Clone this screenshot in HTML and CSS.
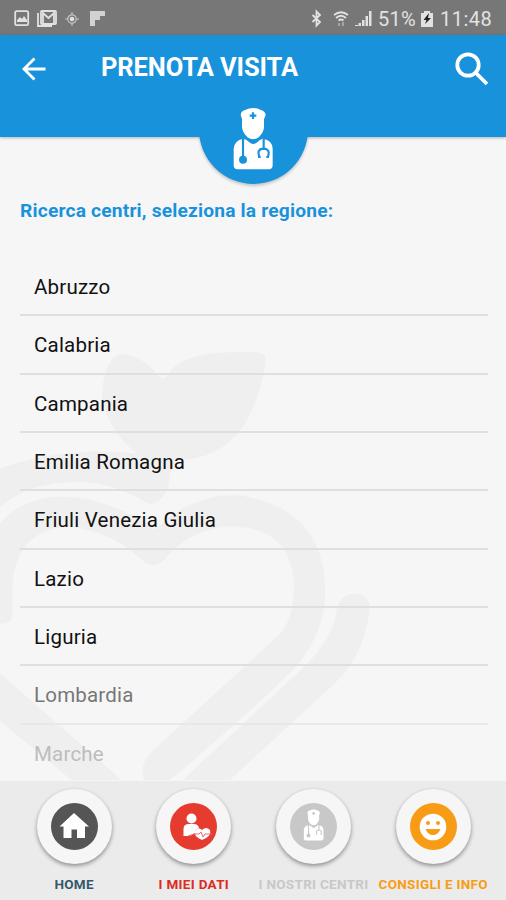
FILE: index.html
```html
<!DOCTYPE html>
<html lang="it">
<head>
<meta charset="utf-8">
<title>Prenota visita</title>
<link rel="stylesheet" href="styles.css">
</head>
<body>
<svg class="defs" aria-hidden="true">
  <symbol id="doctor" viewBox="160 50 125 190">
    <path d="M186 73Q187 62 199 59Q211 53 223 53Q235 53 247 59Q260 63 261 74L256 87V113Q253 130 238 142Q223 151 208 142Q192 129 190 111V87Z"/>
    <path d="M194 145Q204 147 212 156Q223 166 236 156Q243 147 252 145Q282 150 282 175V225Q282 237 270 237H177Q165 237 165 225V175Q166 151 194 145Z"/>
    <g class="cut"><path d="M223 66V86M213 76H233"/><path d="M193 144V200M255 145V178M243 201Q232 176 255 175Q277 177 267 201M238 200h8M263 200h8"/><circle class="cut-fill" cx="193" cy="208" r="12"/></g>
  </symbol>
</svg>
<div class="screen">
  <div class="status">
    <svg class="notices" viewBox="0 0 90 20" width="90" height="20">
      <rect x="1.2" y="2.2" width="13" height="14" rx="1.5" class="line"/><path d="M3 13V11L6 8L8 10L10 7L13 11V13Z"/>
      <path d="M24 4V17H38" class="line"/><rect x="27" y="2" width="15" height="13" rx="1" class="line"/><path d="M29 14V4L34.500 9L40 4V14" class="line"/>
      <circle cx="58" cy="10" r="4.200" class="thin"/><circle cx="58" cy="10" r="2.300"/><path d="M58 3V6M58 14V17M51 10H54M62 10H65" class="thin"/>
      <path d="M76 2H91V7H86V11H81V17H76Z" opacity=".85"/>
    </svg>
    <div class="phone">
      <svg viewBox="0 0 62 20" width="62" height="20">
        <path d="M2.500 6L10 13L6.500 16.500V2.500L10 6L2.500 13" class="line"/>
        <path d="M24 6Q31 .5 38 6M26 9Q31 4.500 36 9M28.500 11.500Q31 9.500 33.500 11.500" class="line"/><path d="M29 17v-3M33 13v4" class="thin"/>
        <path d="M45 16h3v1h-3zM48.500 14h2.500v3h-2.500zM52 11h2.500v6h-2.500zM55.500 7h2.500v10h-2.500zM59 2h2.500v15h-2.500z"/>
      </svg>
      <span class="percent">51%</span>
      <svg viewBox="0 0 12 18" width="12" height="18"><path d="M0 3H3V1H9V3H12V17H0Z"/><path d="M8 3L2.500 10H5.500L4 14L10 8H7Z" fill="#222"/></svg>
      <span class="clock">11:48</span>
    </div>
  </div>
  <header class="bar">
    <svg class="back" viewBox="0 0 24 24" width="24" height="24"><path d="M12.500 1.500L2 12L12.500 22.500M2 12H23.500"/></svg>
    <h1>PRENOTA VISITA</h1>
    <svg class="search" viewBox="0 0 34 34" width="34" height="34"><circle cx="13" cy="13" r="10.700"/><path d="M21 21L32 32"/></svg>
    <div class="badge"><svg width="41.700" height="63.300"><use href="#doctor"/></svg></div>
  </header>
  <main>
    <svg class="mark" viewBox="0 0 1200 1350">
      <path d="M498 142Q535 72 680 67H770Q802 69 797 95Q785 190 735 282Q660 390 535 389Q507 407 507 465Q480 532 440 519Q340 456 230 456Q90 455 0 531V415Q90 382 210 369Q330 357 412 371Q328 309 306 205Q305 134 336 88Q350 67 388 75Q446 94 474 137Q486 147 498 142Z"/>
      <path d="M0 580Q70 500 190 500Q325 500 465 600Q575 490 715 496Q974 532 976 784Q975 908 888 1010Q770 1131 510 1350H432Q416 1304 458 1262L845 907Q886 850 881 749Q867 589 685 589Q568 599 492 690Q460 722 423 688Q320 592 190 591Q49 609 37 765V865Q29 881 0 881Z"/>
      <path d="M0 1030L365 1350H215L0 1173Z"/>
      <path d="M1010 840Q1020 792 1065 791Q1104 794 1109 825Q1100 970 1003 1061L690 1350H548L908 1015Q998 930 1010 840Z"/>
    </svg>
    <h2>Ricerca centri, seleziona la regione:</h2>
    <ul class="regions">
      <li>Abruzzo</li><li>Calabria</li><li>Campania</li><li>Emilia Romagna</li><li>Friuli Venezia Giulia</li><li>Lazio</li><li>Liguria</li><li>Lombardia</li><li>Marche</li>
    </ul>
  </main>
  <nav>
    <a class="home"><span class="ring"><span class="disc"><svg viewBox="0 0 46 46"><path d="M23 9L38 22.500H34V34H26V25.500H20.500V34H12.500V22.500H8.500Z"/></svg></span></span><b>HOME</b></a>
    <a class="data"><span class="ring"><span class="disc"><svg viewBox="0 0 46 46"><circle cx="20.500" cy="14.500" r="5"/><path d="M12.500 32V25Q12.500 20 18 20H23Q27 20 28 24Q24 25 24 29L19 32Z"/><path d="M31 36Q22 32 24 27Q27 22 31 26Q35 22 39 26Q41 32 31 36Z"/><path class="pulse" d="M17 32L23 30H28L30 28L32 33L34 30H41"/></svg></span></span><b>I MIEI DATI</b></a>
    <a class="centers"><span class="ring"><span class="disc"><svg class="mini" width="20" height="32"><use href="#doctor"/></svg></span></span><b>I NOSTRI CENTRI</b></a>
    <a class="tips"><span class="ring"><span class="disc"><svg viewBox="0 0 46 46"><circle cx="23" cy="23" r="13.300"/><g fill="#f89c16"><circle cx="18" cy="19" r="2"/><circle cx="28" cy="19" r="2"/><path d="M15.500 25H30.500Q28 31 23 31Q18 31 15.500 25Z"/></g></svg></span></span><b>CONSIGLI E INFO</b></a>
  </nav>
</div>
</body>
</html>
```

FILE: styles.css
```css
* { box-sizing: border-box; }
body { margin: 0; font-family: Roboto, "Liberation Sans", sans-serif; background: #f6f6f6; --cut: #1992dc; }
.defs { position: absolute; width: 0; height: 0; }
.screen { width: 506px; height: 900px; display: flex; flex-direction: column; overflow: hidden; }
svg { display: block; flex: none; overflow: visible; }
.status { height: 35px; flex: none; background: #777; color: #e2e2e2; fill: #e2e2e2; display: flex; justify-content: space-between; align-items: center; padding: 2px 13px 0 14px; }
.status .line { fill: none; stroke: #e2e2e2; stroke-width: 1.8; }
.status .thin { fill: none; stroke: #c4c4c4; stroke-width: 1.2; }
.phone { display: flex; align-items: center; font-size: 20px; }
.percent { width: 40px; margin: 0 3px 0 6px; letter-spacing: .2px; }
.clock { width: 53px; margin-left: 7px; letter-spacing: .5px; white-space: nowrap; }
.bar { height: 102px; flex: none; background: #1992dc; position: relative; z-index: 2; display: flex; align-items: flex-start; padding: 17px 17px 0 22px; box-shadow: 0 1px 3px #0004; }
.back { margin-top: 5px; }
.back path, .search { fill: none; stroke: #fff; stroke-width: 2.8; }
.search { stroke-width: 3.8; }
h1 { flex: 1; margin: 0 0 0 55px; font-size: 25.500px; line-height: 31px; font-weight: 700; color: #fff; letter-spacing: -.1px; }
.badge { position: absolute; left: 198.500px; top: 40px; width: 109px; height: 109px; border-radius: 50%; background: #1992dc; display: flex; justify-content: center; padding-top: 31.700px; fill: #fff; box-shadow: 0 2px 3px #0003; clip-path: inset(31px -8px -8px -8px); }
.badge::before { content: ""; position: absolute; left: -8px; top: 32px; width: 125px; height: 30px; background: #1992dc; }
.badge svg { position: relative; }
.cut { fill: none; stroke: var(--cut); stroke-width: 6.500; }
.cut-fill { fill: var(--cut); stroke: none; }
main { flex: 1; min-height: 0; position: relative; padding: 61px 18px 0 20px; }
.mark { position: absolute; left: 0; top: 193px; width: 400px; height: 450px; fill: #efefef; }
h2 { position: relative; margin: 0; font-size: 19.200px; line-height: 25px; font-weight: 700; color: #1992dc; letter-spacing: .18px; white-space: nowrap; }
.regions { position: relative; list-style: none; margin: 35.200px 0 0; padding: 0; }
.regions li { height: 58.300px; padding: 1px 14px 0; line-height: 57px; font-size: 20.500px; letter-spacing: .2px; color: #111; border-bottom: 2px solid #dfdfdf; }
.regions li:nth-child(8) { color: #777; border-color: #e8e8e8; }
.regions li:nth-child(9) { color: #bdbdbd; border: 0; }
nav { position: relative; z-index: 1; height: 119px; flex: none; background: #ebebeb; display: grid; grid-template-columns: repeat(4, 119.700px); padding: 8px 0 0 14.300px; }
nav a { display: flex; flex-direction: column; align-items: center; fill: #fff; }
.ring { width: 75px; height: 75px; border-radius: 50%; background: #f6f6f6; display: grid; place-items: center; box-shadow: 0 2px 4px #0006; }
.disc { width: 47px; height: 47px; border-radius: 50%; background: currentColor; display: grid; place-items: center; }
.disc svg { width: 46px; height: 46px; }
.disc .mini { width: 21px; height: 32px; margin-top: -4px; }
nav b { margin-top: 12px; font-size: 13.500px; line-height: 16px; letter-spacing: .3px; white-space: nowrap; }
.home { color: #555; }
.home b { color: #34596b; }
.data { color: #e63c30; }
.data b { color: #db2b25; }
.centers { color: #c8c8c8; --cut: #c8c8c8; }
.tips { color: #f89c16; }
.pulse { fill: none; stroke: #e86a7a; stroke-width: 1; }
```
